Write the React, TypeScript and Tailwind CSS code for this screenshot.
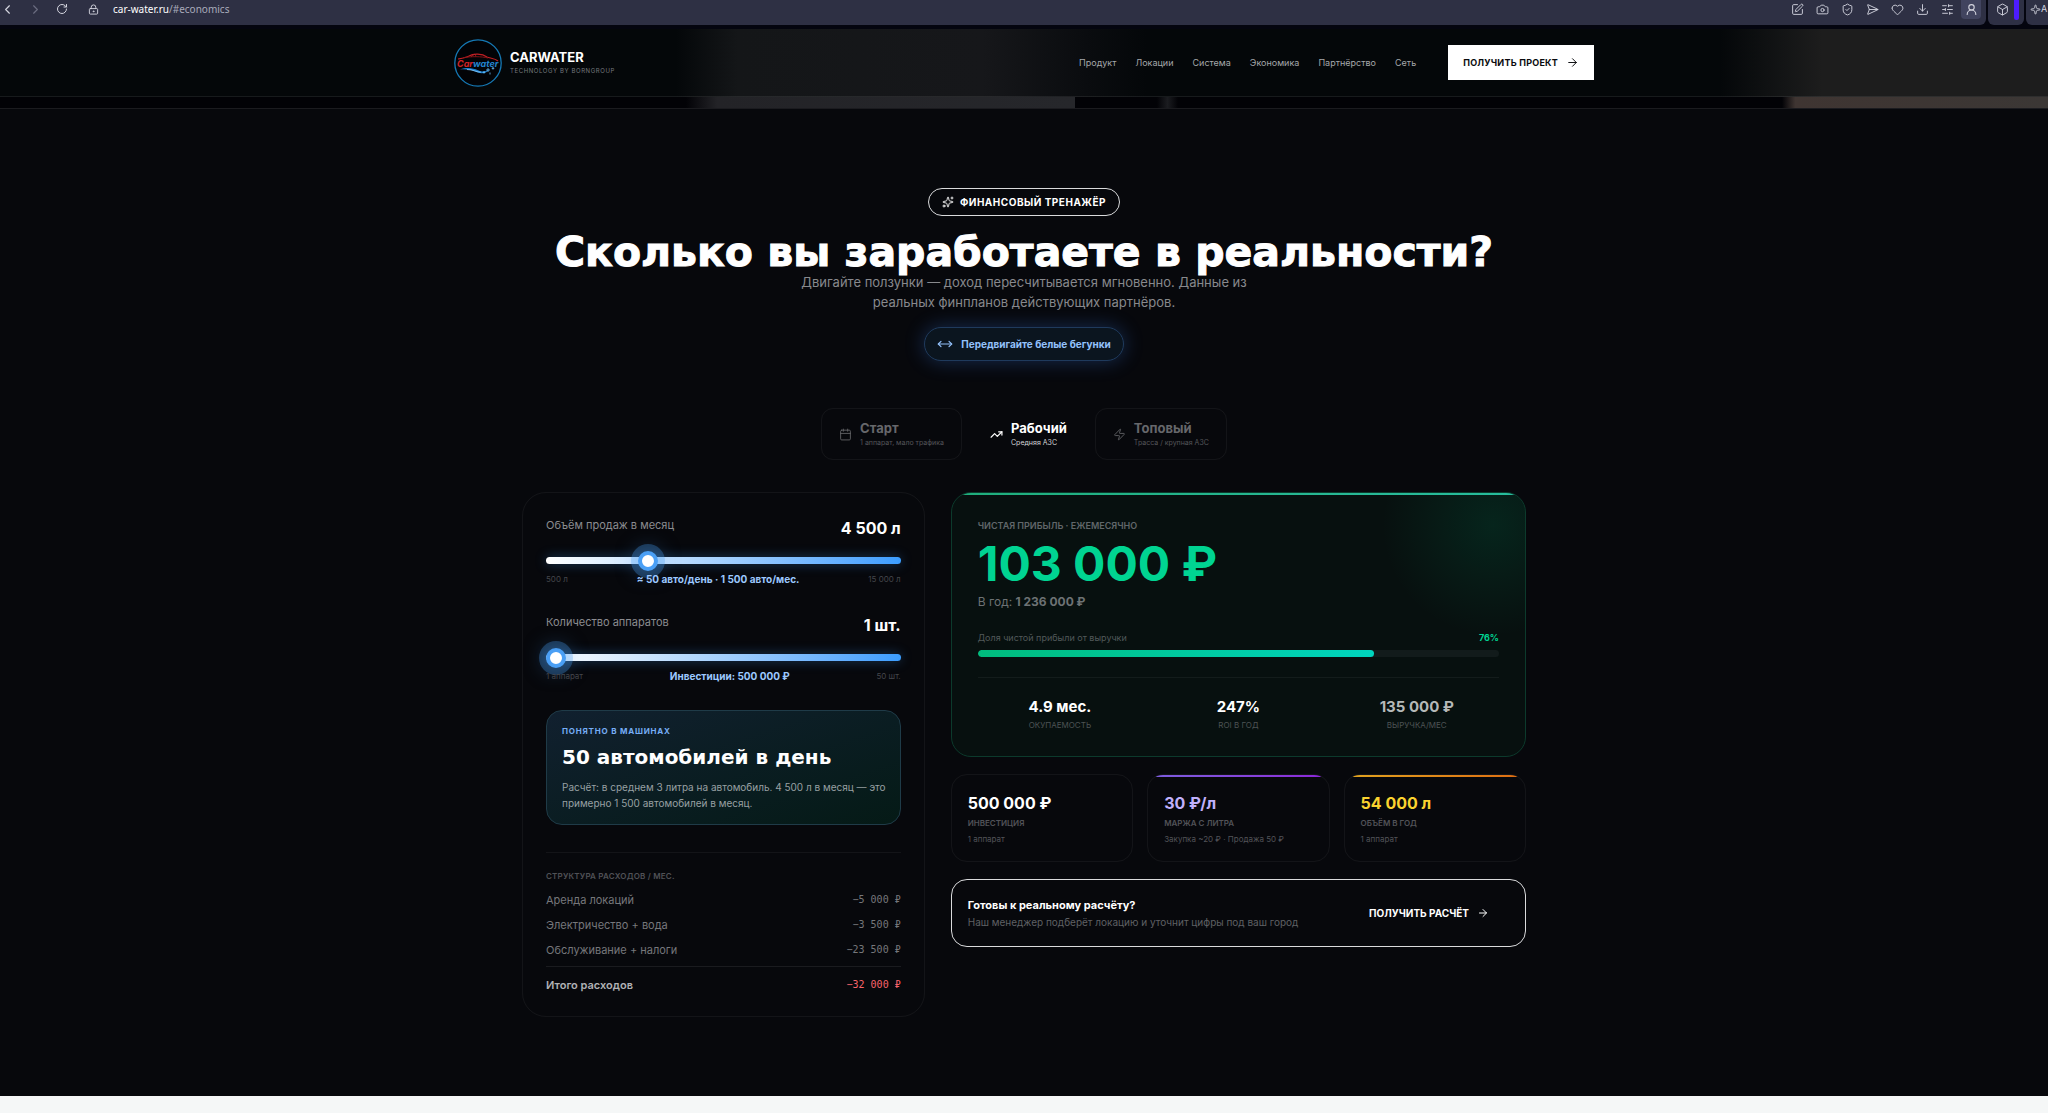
import React, { useState } from 'react';
import {
  ArrowRight, Box, Calendar, Camera, ChevronLeft, ChevronRight, Download, Heart, LockKeyhole, MoveHorizontal,
  RotateCw, SendHorizontal, ShieldCheck, SlidersHorizontal, Sparkle, Sparkles, SquarePen, TrendingUp, UserRound, Zap,
} from 'lucide-react';

const navLinks = ['Продукт', 'Локации', 'Система', 'Экономика', 'Партнёрство', 'Сеть'];

const presets = [
  { id: 'start', title: 'Старт', note: '1 аппарат, мало трафика', icon: Calendar, volume: 1500 },
  { id: 'work', title: 'Рабочий', note: 'Средняя АЗС', icon: TrendingUp, volume: 4500 },
  { id: 'top', title: 'Топовый', note: 'Трасса / крупная АЗС', icon: Zap, volume: 9000 },
];

const expenses = [
  { label: 'Аренда локаций', amount: 5000 },
  { label: 'Электричество + вода', amount: 3500 },
  { label: 'Обслуживание + налоги', amount: 23500 },
];

const browserTools = [
  { label: 'Заметка', icon: SquarePen },
  { label: 'Снимок', icon: Camera },
  { label: 'Защита', icon: ShieldCheck },
  { label: 'Отправить', icon: SendHorizontal },
  { label: 'Избранное', icon: Heart },
  { label: 'Загрузки', icon: Download },
  { label: 'Настройки', icon: SlidersHorizontal },
];

const MARGIN = 30;
const UNIT_PRICE = 500000;

const fmt = (n: number) => String(Math.round(n)).replace(/\B(?=(\d{3})+(?!\d))/g, '\u00a0');

const sliderClass =
  'block h-[7px] w-full cursor-pointer appearance-none rounded-full bg-linear-to-r from-white to-[#3b9dff] shadow-[0_0_12px_rgba(59,157,255,0.35)] outline-none [&::-webkit-slider-thumb]:h-5 [&::-webkit-slider-thumb]:w-5 [&::-webkit-slider-thumb]:appearance-none [&::-webkit-slider-thumb]:rounded-full [&::-webkit-slider-thumb]:border-4 [&::-webkit-slider-thumb]:border-[#4a9ff5] [&::-webkit-slider-thumb]:bg-white [&::-webkit-slider-thumb]:shadow-[0_0_0_7px_rgba(74,159,245,0.3),0_0_22px_rgba(74,159,245,0.5)]';

function BrowserBar() {
  return (
    <div className="flex h-[29px] gap-[2px] bg-[#04050f] pb-1 text-[#d5d6e0]">
      <div className="flex flex-1 items-start rounded-br-md bg-[#2e3044]">
        <div className="flex h-[18px] items-center">
          <button aria-label="Назад" className="w-3"><ChevronLeft size={15} strokeWidth={1.8} /></button>
          <button aria-label="Вперёд" className="ml-4 w-3 text-[#6b6d80]"><ChevronRight size={15} strokeWidth={1.8} /></button>
          <button aria-label="Обновить" className="ml-4"><RotateCw size={12} strokeWidth={2} /></button>
          <LockKeyhole className="ml-5" size={11} strokeWidth={2} />
          <a href="#economics" className="ml-[14px] text-[10px] leading-[18px] text-[#a9abbb] [font-family:'Noto_Sans',sans-serif]">
            <span className="text-white">car-water.ru</span>/#economics
          </a>
        </div>
        <div className="ml-auto flex h-[18px] items-center gap-3 pr-[7px]">
          {browserTools.map(({ label, icon: Icon }) => (
            <button key={label} aria-label={label}><Icon size={13} strokeWidth={1.7} /></button>
          ))}
        </div>
        <button aria-label="Профиль" className="mr-[5px] flex h-[19px] w-5 items-center justify-center rounded-b bg-[#41445f]">
          <UserRound size={13} strokeWidth={2} />
        </button>
      </div>
      <div className="flex w-9 items-start gap-[5px] rounded-b-md bg-[#2e3044] pl-2">
        <button aria-label="Расширение" className="flex h-[18px] items-center"><Box size={13} strokeWidth={1.7} /></button>
        <div className="h-5 w-[5px] rounded-b-sm bg-[#4d1cff]" />
      </div>
      <div className="flex h-full w-[22px] items-start overflow-hidden rounded-bl-md bg-[#2e3044] pl-1">
        <span className="flex h-[18px] items-center text-[9px]"><Sparkle className="shrink-0" size={11} strokeWidth={1.8} />A</span>
      </div>
    </div>
  );
}

function Logo() {
  return (
    <svg viewBox="0 0 48 48" className="h-12 w-12 shrink-0" aria-label="Carwater">
      <circle cx="24" cy="24" r="23.2" fill="#020306" stroke="#1578b4" strokeWidth="1.3" />
      <path d="M4 20c5-.8 8-1.200 11-3 4-2.600 13-2.600 18 1 3 1.200 8 1.400 11 4" fill="none" stroke="#c01f24" strokeWidth="1.200" />
      <path d="M9 18.800c8-1.600 19-1.400 25 .2" fill="none" stroke="#8b1519" strokeWidth=".9" />
      <path d="M17 17.500l4-2.500 1 2.500" fill="none" stroke="#c01f24" strokeWidth=".7" />
      <text x="3" y="27.500" fontSize="9" fontStyle="italic" fontWeight="700" fontFamily="Inter, sans-serif" fill="#cf2328">
        Car<tspan fill="#2383cf">water</tspan>
      </text>
      <path d="M6 30.500c7-2.600 13-1.400 18 .8 4 1.800 8 1.600 11-1-2 4.200-7 5-12 3-5-2-10-3.400-17-2.800z" fill="#1c7fd0" />
      <path d="M13 30.500c6 0 10 3 14 2.600" fill="none" stroke="#9fd8ff" strokeWidth=".7" />
      <path d="M34 29v4M32 31h4M39 28v2.600M37.700 29.300h2.600M30 32v2.600M28.700 33.300h2.600M36 33.500v2" stroke="#6cc4ff" strokeWidth=".8" />
    </svg>
  );
}

function Header() {
  return (
    <header className="border-b border-white/8 bg-[linear-gradient(90deg,#040709_33%,#141618_36%,#16171a_48%,#0a0c0f_53%,#040709_56%,#040709_84%,#1d1d1d_89%)]">
      <div className="mx-auto flex h-[67px] max-w-[1140px] items-center">
        <a href="#" className="flex items-center gap-2">
          <Logo />
          <span className="flex flex-col">
            <span className="text-[13px] leading-4 font-bold text-white">CARWATER</span>
            <span className="text-[6px] leading-[11px] tracking-widest text-[#75797e]">TECHNOLOGY BY BORNGROUP</span>
          </span>
        </a>
        <nav className="ml-auto flex items-center gap-[19px] text-[9px] text-[#a5a8ab]">
          {navLinks.map((link) => (
            <a key={link} href="#">{link}</a>
          ))}
        </nav>
        <button className="ml-8 flex h-[35px] items-center gap-2 bg-white px-[15px] text-[9px] font-bold tracking-wide text-[#0a0b0e]">
          ПОЛУЧИТЬ ПРОЕКТ
          <ArrowRight size={13} strokeWidth={1.8} />
        </button>
      </div>
    </header>
  );
}

function PhotoStrip() {
  return (
    <div className="flex h-3 border-b border-white/10 bg-[#020206]">
      <div className="w-[33.5%]" />
      <div className="w-[19%] bg-linear-to-r from-transparent via-[#232327] via-8% to-[#26272b]" />
      <div className="w-[4%]" />
      <div className="w-[1%] bg-linear-to-r from-transparent via-[#1b1c20] to-transparent" />
      <div className="w-[29.5%]" />
      <div className="flex-1 bg-linear-to-r from-transparent via-[#3f3532] via-5% to-[#3b3735]" />
    </div>
  );
}

type SliderProps = {
  id: string;
  label: string;
  value: number;
  display: string;
  min: number;
  max: number;
  step: number;
  minLabel: string;
  maxLabel: string;
  hint: string;
  onChange: (n: number) => void;
};

function SliderField({ id, label, value, display, min, max, step, minLabel, maxLabel, hint, onChange }: SliderProps) {
  return (
    <div>
      <div className="flex items-start justify-between">
        <label htmlFor={id} className="text-[11px] leading-4 text-[#8b8c90]">{label}</label>
        <span className="text-base leading-[22px] font-bold text-white">{display}</span>
      </div>
      <div className="flex h-8 items-end pb-[7px]">
        <input
          id={id}
          type="range"
          min={min}
          max={max}
          step={step}
          value={value}
          onChange={(e) => onChange(Number(e.target.value))}
          className={sliderClass}
        />
      </div>
      <div className="flex items-center justify-between leading-4">
        <span className="text-[8px] text-[#44464b]">{minLabel}</span>
        <span className="text-[10px] font-bold text-[#9cc8ff]">{hint}</span>
        <span className="text-[8px] text-[#44464b]">{maxLabel}</span>
      </div>
    </div>
  );
}

export default function App() {
  const [preset, setPreset] = useState('work');
  const [volume, setVolume] = useState(4500);
  const [units, setUnits] = useState(1);

  const totalExpenses = expenses.reduce((sum, e) => sum + e.amount, 0);
  const revenue = volume * units * MARGIN;
  const profit = revenue - totalExpenses;
  const investment = units * UNIT_PRICE;
  const share = Math.max(0, Math.round((profit / revenue) * 100));
  const carsPerMonth = volume / 3;
  const carsPerDay = Math.round(carsPerMonth / 30);
  const unitsLabel = units === 1 ? '1 аппарат' : `${units} аппаратов`;

  const stats = [
    { value: `${(investment / profit).toFixed(1)} мес.`, label: 'ОКУПАЕМОСТЬ', color: 'text-white' },
    { value: `${Math.round(((profit * 12) / investment) * 100)}%`, label: 'ROI В ГОД', color: 'text-white' },
    { value: `${fmt(revenue)} ₽`, label: 'ВЫРУЧКА/МЕС', color: 'text-[#b5b9b8]' },
  ];

  const tiles = [
    { value: `${fmt(investment)} ₽`, label: 'ИНВЕСТИЦИЯ', note: unitsLabel, color: 'text-white', bar: 'bg-transparent' },
    { value: `${MARGIN} ₽/л`, label: 'МАРЖА С ЛИТРА', note: 'Закупка ~20 ₽ · Продажа 50 ₽', color: 'text-[#c0b0fb]', bar: 'bg-linear-to-r from-[#7c5fe0] to-[#8b22d8]' },
    { value: `${fmt(volume * units * 12)} л`, label: 'ОБЪЁМ В ГОД', note: unitsLabel, color: 'text-[#fbd32f]', bar: 'bg-linear-to-r from-[#e0a420] to-[#dd6b12]' },
  ];

  return (
    <div className="flex min-h-screen flex-col bg-[#07080c] [font-family:Inter,'Noto_Sans',sans-serif]">
      <BrowserBar />
      <Header />
      <PhotoStrip />

      <main className="px-6 pt-[79px] pb-[79px]">
        <section id="economics" className="mx-auto max-w-[1004px]">
          {/* Intro */}
          <div className="flex flex-col items-center text-center">
            <div className="flex h-7 items-center gap-[6px] rounded-full border border-[#d9dadc] px-[13px] text-[10px] font-bold tracking-wider text-white">
              <Sparkles size={12} strokeWidth={1.8} />
              ФИНАНСОВЫЙ ТРЕНАЖЁР
            </div>
            <h1 className="mt-4 text-[41px] leading-10 font-bold whitespace-nowrap text-white [-webkit-text-stroke:1px_white] [font-family:'DejaVu_Sans',sans-serif]">
              Сколько вы заработаете в реальности?
            </h1>
            <p className="max-w-[450px] text-[13px] leading-5 text-[#88898d]">
              Двигайте ползунки — доход пересчитывается мгновенно. Данные из реальных финпланов действующих партнёров.
            </p>
            <div className="mt-[15px] flex h-[34px] items-center gap-2 rounded-full border border-[#1f3a5c] bg-[#0b151f] px-3 text-[10px] font-bold text-[#93c1fb] shadow-[0_0_20px_rgba(59,130,246,0.3)]">
              <MoveHorizontal size={16} strokeWidth={1.8} />
              Передвигайте белые бегунки
            </div>
          </div>

          {/* Presets */}
          <div className="mt-[47px] flex justify-center gap-[10px]">
            {presets.map(({ id, title, note, icon: Icon, volume: v }) => {
              const active = preset === id;
              return (
                <button
                  key={id}
                  aria-pressed={active}
                  onClick={() => { setPreset(id); setVolume(v); }}
                  className={`flex h-[52px] items-center gap-2 rounded-xl border px-[17px] text-left ${active ? 'border-transparent text-white' : 'border-white/5 text-[#66676b]'}`}
                >
                  <Icon size={13} strokeWidth={active ? 2.2 : 1.6} />
                  <span className="flex flex-col">
                    <span className="text-[13px] leading-[18px] font-bold">{title}</span>
                    <span className={`text-[7px] leading-3 ${active ? 'text-[#d4d5d7]' : 'text-[#55565a]'}`}>{note}</span>
                  </span>
                </button>
              );
            })}
          </div>

          <div className="mt-8 grid grid-cols-[7fr_10fr] items-start gap-[26px]">
            {/* Controls */}
            <div className="rounded-3xl border border-white/5 px-[23px] pt-6 pb-[23px]">
              <div className="flex flex-col gap-[27px]">
                <SliderField
                  id="volume"
                  label="Объём продаж в месяц"
                  value={volume}
                  display={`${fmt(volume)} л`}
                  min={500}
                  max={15000}
                  step={100}
                  minLabel="500 л"
                  maxLabel="15 000 л"
                  hint={`≈ ${carsPerDay} авто/день · ${fmt(carsPerMonth)} авто/мес.`}
                  onChange={setVolume}
                />
                <SliderField
                  id="units"
                  label="Количество аппаратов"
                  value={units}
                  display={`${units} шт.`}
                  min={1}
                  max={50}
                  step={1}
                  minLabel="1 аппарат"
                  maxLabel="50 шт."
                  hint={`Инвестиции: ${fmt(investment)} ₽`}
                  onChange={setUnits}
                />
              </div>

              <div className="mt-[26px] rounded-2xl border border-[#1f3b48] bg-linear-to-br from-[#11202f] to-[#051a16] py-[13px] pr-2 pl-[15px]">
                <div className="text-[8px] leading-[14px] font-bold tracking-widest text-[#76adf5]">ПОНЯТНО В МАШИНАХ</div>
                <div className="mt-[7px] text-xl leading-6 font-bold text-white [font-family:'DejaVu_Sans',sans-serif]">
                  {`${carsPerDay} автомобилей в день`}
                </div>
                <p className="mt-[10px] text-[10px] leading-4 text-[#98a0a3]">
                  {`Расчёт: в среднем 3 литра на автомобиль. ${fmt(volume)} л в месяц — это примерно ${fmt(carsPerMonth)} автомобилей в месяц.`}
                </p>
              </div>

              <div className="mt-[27px] border-t border-white/5 pt-4">
                <table className="w-full text-[11px] leading-4 text-[#76777b]">
                  <caption className="pb-[5px] text-left text-[8px] leading-[14px] font-semibold tracking-wide text-[#505156]">
                    СТРУКТУРА РАСХОДОВ / МЕС.
                  </caption>
                  <tbody className="[&>tr:last-child>td]:pb-2">
                    {expenses.map((e) => (
                      <tr key={e.label}>
                        <td className="pt-1 pb-[5px]">{e.label}</td>
                        <td className="pt-1 pb-[5px] text-right text-[10px] [font-family:'DejaVu_Sans_Mono',monospace]">{`−${fmt(e.amount)} ₽`}</td>
                      </tr>
                    ))}
                  </tbody>
                  <tfoot>
                    <tr className="border-t border-white/8 font-semibold text-[#b0b1b4]">
                      <td className="pt-[10px]">Итого расходов</td>
                      <td className="pt-[10px] text-right text-[10px] font-normal text-[#f8646b] [font-family:'DejaVu_Sans_Mono',monospace]">
                        {`−${fmt(totalExpenses)} ₽`}
                      </td>
                    </tr>
                  </tfoot>
                </table>
              </div>
            </div>

            {/* Results */}
            <div className="flex flex-col gap-[17px]">
              <div className="relative overflow-hidden rounded-[20px] border border-[#0c3a2c] bg-[#07100f] px-[26px] pt-[26px] pb-[25px]">
                <div className="absolute inset-x-0 top-0 h-[2px] bg-linear-to-r from-[#1fae7c] to-[#2bbda0]" />
                <div className="absolute -top-20 -right-20 h-56 w-56 bg-radial from-[#00bc7d]/12 to-transparent to-70%" />
                <div className="text-[9px] leading-[14px] font-semibold text-[#61676a]">ЧИСТАЯ ПРИБЫЛЬ · ЕЖЕМЕСЯЧНО</div>
                <div className="mt-[5px] text-5xl leading-[52px] font-bold text-[#00d492]">{fmt(profit)} ₽</div>
                <div className="mt-[3px] text-xs leading-[18px] text-[#6d7274]">
                  В год: <b className="font-bold">{`${fmt(profit * 12)} ₽`}</b>
                </div>
                <div className="mt-[19px] flex justify-between text-[9px] leading-4 text-[#52595a]">
                  <span>Доля чистой прибыли от выручки</span>
                  <span className="font-bold text-[#00d492]">{share}%</span>
                </div>
                <div className="mt-1 h-[7px] overflow-hidden rounded-full bg-[#121b1b]">
                  <div className="h-full rounded-full bg-linear-to-r from-[#00bc7d] to-[#00d5be]" style={{ width: `${share}%` }} />
                </div>
                <div className="mt-5 grid grid-cols-3 gap-[14px] border-t border-white/5 pt-[19px] text-center">
                  {stats.map((s) => (
                    <div key={s.label}>
                      <div className={`text-[15px] leading-5 font-bold ${s.color}`}>{s.value}</div>
                      <div className="mt-[2px] text-[8px] leading-3 text-[#4d5354]">{s.label}</div>
                    </div>
                  ))}
                </div>
              </div>

              <div className="grid grid-cols-3 gap-[14px]">
                {tiles.map((t) => (
                  <div key={t.label} className="relative overflow-hidden rounded-2xl border border-white/5 px-4 pt-[17px] pb-4">
                    <div className={`absolute inset-x-0 top-0 h-[2px] ${t.bar}`} />
                    <div className={`text-base leading-[22px] font-bold ${t.color}`}>{t.value}</div>
                    <div className="mt-[3px] text-[8px] leading-3 font-semibold text-[#525358]">{t.label}</div>
                    <div className="mt-1 text-[8px] leading-3 text-[#525358]">{t.note}</div>
                  </div>
                ))}
              </div>

              <div className="flex items-center justify-between rounded-2xl border border-[#d9dadc] py-[17px] pr-9 pl-4">
                <div>
                  <div className="text-[11px] leading-4 font-bold text-white">Готовы к реальному расчёту?</div>
                  <div className="mt-[2px] text-[10px] leading-[14px] text-[#5f6064]">Наш менеджер подберёт локацию и уточнит цифры под ваш город</div>
                </div>
                <button className="flex items-center gap-2 text-[10px] font-bold text-white">
                  ПОЛУЧИТЬ РАСЧЁТ
                  <ArrowRight size={12} strokeWidth={2} />
                </button>
              </div>
            </div>
          </div>
        </section>
      </main>

      <footer className="min-h-4 flex-1 bg-[#f5f7f7]" />
    </div>
  );
}
